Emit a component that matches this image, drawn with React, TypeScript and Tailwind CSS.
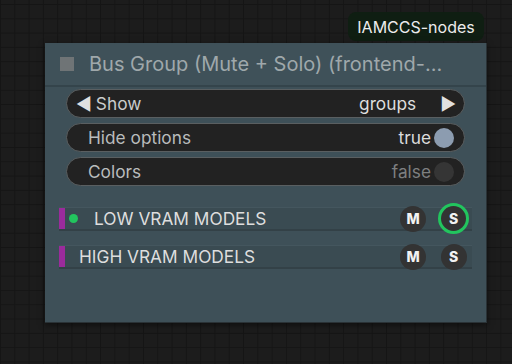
import React from 'react';

const font = { fontFamily: 'Inter, "Noto Sans", sans-serif' };

const Pill = ({ children }: { children: React.ReactNode }) => (
  <div className="flex h-[29px] items-center rounded-full border border-[#5a5f61] bg-[#222222] text-[17.3px]">
    {children}
  </div>
);

const Toggle = ({ label, value, on }: { label: string; value: string; on: boolean }) => (
  <Pill>
    <span className="ml-[21px] text-[#b9bcbd]">{label}</span>
    <span className={`ml-auto mr-[3px] ${on ? 'text-[#dcdcdc]' : 'text-[#7d7f80]'}`}>{value}</span>
    <span
      className={`mr-[10px] h-[20px] w-[20px] rounded-full ${on ? 'bg-[#8c9cb0]' : 'bg-[#353535]'}`}
    />
  </Pill>
);

const RoundBtn = ({ letter, active }: { letter: string; active?: boolean }) => (
  <div
    className={`flex items-center justify-center rounded-full bg-[#333333] text-[14px] font-extrabold text-[#f2f2f2] ${
      active ? 'h-[31px] w-[31px] border-[3px] border-[#22c55e]' : 'h-[26px] w-[26px]'
    }`}
  >
    {letter}
  </div>
);

const GroupRow = ({ name, active }: { name: string; active?: boolean }) => (
  <div className="flex h-[24px] items-center border-b-2 border-t border-b-[#334147] border-t-[#44565e] bg-[#3a4b52]">
    <div className="h-full w-[6px] bg-[#9b2b9c]" />
    {active ? (
      <>
        <span className="ml-[4px] h-[9px] w-[9px] rounded-full bg-[#22c55e]" />
        <span className="ml-[16px] text-[17.3px] text-[#dedede]">{name}</span>
      </>
    ) : (
      <span className="ml-[14px] text-[17.3px] text-[#dedede]">{name}</span>
    )}
    <div className="ml-auto flex items-center">
      <RoundBtn letter="M" />
      <div className="ml-[12px] mr-[3px] flex w-[31px] justify-center">
        <RoundBtn letter="S" active={active} />
      </div>
    </div>
  </div>
);

export default function App() {
  return (
    <div
      className="relative h-[364px] w-[512px] overflow-hidden bg-[#1c1c1c] bg-[linear-gradient(to_right,#151515_1px,transparent_1px),linear-gradient(to_bottom,#151515_1px,transparent_1px)] bg-[size:14.3px_14.3px] bg-[position:0px_4px]"
      style={font}
    >
      {/* source badge */}
      <div className="absolute left-[348px] top-[12px] flex h-[29px] w-[136px] items-center justify-center rounded-[8px] bg-[#0f1e12] text-[16px] text-[#ececec]">
        IAMCCS-nodes
      </div>

      {/* node */}
      <div className="absolute left-[45px] top-[43px] h-[280px] w-[442px] border-b border-r border-[#2a3236] bg-[#3e5058] shadow-[0_2px_6px_rgba(0,0,0,0.5)]">
        <div className="flex h-[44px] items-center border-b-2 border-[#34444b] bg-[#3f5159]">
          <span className="ml-[15px] h-[14px] w-[14px] bg-[#6f7476]" />
          <span className="ml-[15px] whitespace-nowrap text-[20px] text-[#9fa8ab]">Bus Group (Mute + Solo) (frontend-...</span>
        </div>

        <div className="mx-[21px] mt-[2px] flex flex-col gap-[5px]">
          <Pill>
            <span className="ml-[9px] text-[#e0e0e0]">◀</span>
            <span className="ml-[4px] text-[#c9cbcc]">Show</span>
            <span className="ml-auto text-[#dedede]">groups</span>
            <span className="ml-[24px] mr-[8px] text-[#e0e0e0]">▶</span>
          </Pill>
          <Toggle label="Hide options" value="true" on />
          <Toggle label="Colors" value="false" on={false} />
        </div>

        <div className="mx-[14px] mt-[21px] flex flex-col gap-[14px]">
          <GroupRow name="LOW VRAM MODELS" active />
          <GroupRow name="HIGH VRAM MODELS" />
        </div>
      </div>
    </div>
  );
}
